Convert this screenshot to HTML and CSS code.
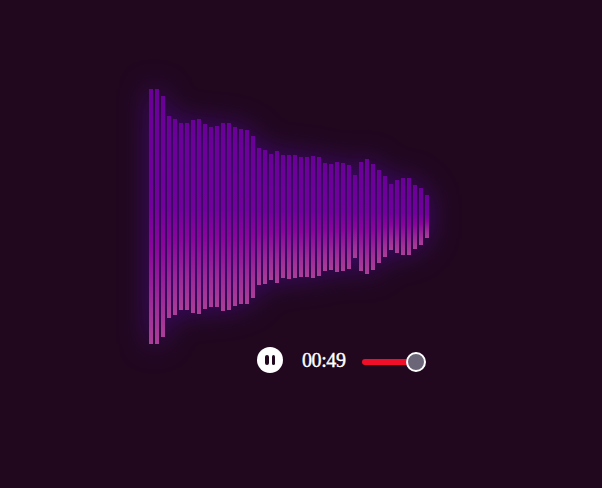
FILE: index.html
```html
<!DOCTYPE html>
<html lang="en">
<head>
<meta charset="UTF-8">
<meta name="viewport" content="width=device-width, initial-scale=1.0">
<title>Audio Player</title>
<link rel="stylesheet" href="styles.css">
</head>
<body>
<div class="player">
    <div class="bars">
        <span class="bar" style="height:255px"></span>
        <span class="bar" style="height:255px"></span>
        <span class="bar" style="height:241px"></span>
        <span class="bar" style="height:202px"></span>
        <span class="bar" style="height:196px"></span>
        <span class="bar" style="height:187px"></span>
        <span class="bar" style="height:187px"></span>
        <span class="bar" style="height:193px"></span>
        <span class="bar" style="height:195px"></span>
        <span class="bar" style="height:185px"></span>
        <span class="bar" style="height:180px"></span>
        <span class="bar" style="height:181px"></span>
        <span class="bar" style="height:188px"></span>
        <span class="bar" style="height:187px"></span>
        <span class="bar" style="height:179px"></span>
        <span class="bar" style="height:175px"></span>
        <span class="bar" style="height:174px"></span>
        <span class="bar" style="height:162px"></span>
        <span class="bar" style="height:137px"></span>
        <span class="bar" style="height:134px"></span>
        <span class="bar" style="height:126px"></span>
        <span class="bar" style="height:132px"></span>
        <span class="bar" style="height:123px"></span>
        <span class="bar" style="height:124px"></span>
        <span class="bar" style="height:123px"></span>
        <span class="bar" style="height:120px"></span>
        <span class="bar" style="height:120px"></span>
        <span class="bar" style="height:122px"></span>
        <span class="bar" style="height:119px"></span>
        <span class="bar" style="height:108px"></span>
        <span class="bar" style="height:106px"></span>
        <span class="bar" style="height:110px"></span>
        <span class="bar" style="height:108px"></span>
        <span class="bar" style="height:104px"></span>
        <span class="bar" style="height:83px"></span>
        <span class="bar" style="height:109px"></span>
        <span class="bar" style="height:115px"></span>
        <span class="bar" style="height:106px"></span>
        <span class="bar" style="height:93px"></span>
        <span class="bar" style="height:81px"></span>
        <span class="bar" style="height:66px"></span>
        <span class="bar" style="height:73px"></span>
        <span class="bar" style="height:77px"></span>
        <span class="bar" style="height:77px"></span>
        <span class="bar" style="height:64px"></span>
        <span class="bar" style="height:57px"></span>
        <span class="bar" style="height:43px"></span>
    </div>
    <div class="controls">
        <button class="play-btn" aria-label="Pause">
            <span class="pause-line"></span>
            <span class="pause-line"></span>
        </button>
        <span class="time">00:49</span>
        <div class="slider">
            <div class="slider-track"></div>
            <div class="slider-thumb"></div>
        </div>
    </div>
</div>
</body>
</html>
```

FILE: styles.css
```css
body {
    margin: 0;
    padding: 0;
    height: 488px;
    overflow: hidden;
    background-color: #21081f;
    font-family: "Liberation Serif", serif;
}
.player {
    width: 280px;
    padding: 89px 0 0 149px;
}
.bars {
    display: flex;
    align-items: center;
    gap: 2px;
    height: 255px;
    filter: drop-shadow(0 0 14px rgba(85, 10, 175, 0.75));
}
.bar {
    flex: none;
    width: 4px;
    background: linear-gradient(to bottom, #6a0098 0%, #72009c 45%, #8a059c 62%, #9e2c98 85%, #aa3e98 100%);
}
.controls {
    display: flex;
    align-items: center;
    margin: 3px 0 0 108px;
}
.play-btn {
    display: flex;
    justify-content: center;
    align-items: center;
    gap: 3px;
    width: 26px;
    height: 26px;
    padding: 0;
    border: none;
    border-radius: 50%;
    background-color: #fff;
}
.pause-line {
    width: 3.5px;
    height: 10px;
    border-radius: 2px;
    background-color: #21081f;
}
.time {
    margin-left: 19px;
    color: #fff;
    font-size: 20px;
    letter-spacing: -0.4px;
    -webkit-text-stroke: 0.4px #fff;
}
.slider {
    display: flex;
    align-items: center;
    margin: 3px 0 0 16px;
}
.slider-track {
    width: 50px;
    height: 6px;
    border-radius: 3px;
    background-color: #f00f28;
}
.slider-thumb {
    box-sizing: border-box;
    width: 20px;
    height: 20px;
    margin-left: -6px;
    border: 2px solid #fff;
    border-radius: 50%;
    background-color: #6a6678;
}
```
